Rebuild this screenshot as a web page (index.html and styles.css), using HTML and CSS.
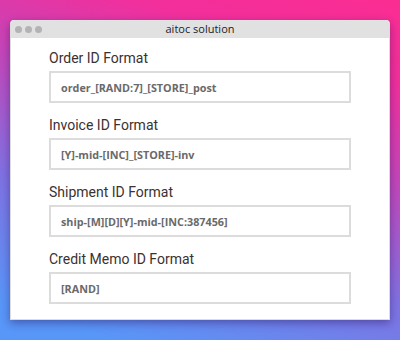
FILE: index.html
```html
<!DOCTYPE html>
<html>
<head>
<meta charset="utf-8">
<link rel="stylesheet" href="styles.css">
</head>
<body>
<div class="window">
  <div class="titlebar">
    <div class="dots"><span class="dot"></span><span class="dot"></span><span class="dot"></span></div>
    <div class="title">aitoc solution</div>
  </div>
  <div class="content">
    <div class="field">
      <div class="label">Order ID Format</div>
      <div class="input">order_[RAND:7]_[STORE]_post</div>
    </div>
    <div class="field">
      <div class="label">Invoice ID Format</div>
      <div class="input">[Y]-mid-[INC]_[STORE]-inv</div>
    </div>
    <div class="field">
      <div class="label">Shipment ID Format</div>
      <div class="input">ship-[M][D][Y]-mid-[INC:387456]</div>
    </div>
    <div class="field">
      <div class="label">Credit Memo ID Format</div>
      <div class="input">[RAND]</div>
    </div>
  </div>
</div>
</body>
</html>
```
FILE: styles.css
```css
html, body {
  margin: 0;
  padding: 0;
}
body {
  width: 400px;
  height: 340px;
  overflow: hidden;
  background: linear-gradient(18deg, #5896f7 8%, #7f72e2 35%, #c545b8 62%, #f22f9c 82%, #fb2d92 100%);
  font-family: Roboto, "Noto Sans", sans-serif;
  padding: 20px 10px 0 10px;
  box-sizing: border-box;
}
.window {
  width: 380px;
  height: 300px;
  background: #fff;
  border-radius: 4px 4px 0 0;
  box-shadow: 0 3px 8px rgba(40, 20, 90, 0.45);
  display: flex;
  flex-direction: column;
  overflow: hidden;
  border: 1px solid #dcdcdc;
  border-top: none;
  box-sizing: border-box;
}
.titlebar {
  height: 18px;
  background: #e1e1e1;
  position: relative;
  display: flex;
  align-items: center;
  justify-content: center;
}
.dots {
  position: absolute;
  left: 4px;
  top: 6px;
  display: flex;
  gap: 3px;
}
.dot {
  width: 7px;
  height: 7px;
  border-radius: 50%;
  background: #b3b3b3;
}
.title {
  font-family: "Open Sans", "Liberation Sans", sans-serif;
  font-size: 11px;
  color: #222;
  line-height: 18px;
}
.content {
  padding: 10px 38px 0 38px;
  display: flex;
  flex-direction: column;
  gap: 12px;
}
.field {
  display: flex;
  flex-direction: column;
  gap: 3px;
}
.label {
  font-size: 14px;
  line-height: 20px;
  color: #3b3131;
}
.input {
  height: 32px;
  box-sizing: border-box;
  border: 2px solid #dcdcdc;
  padding: 0 10px;
  display: flex;
  align-items: center;
  font-family: "Open Sans", "Liberation Sans", sans-serif;
  font-weight: 700;
  font-size: 10.8px;
  color: #6a6a6a;
}
```
